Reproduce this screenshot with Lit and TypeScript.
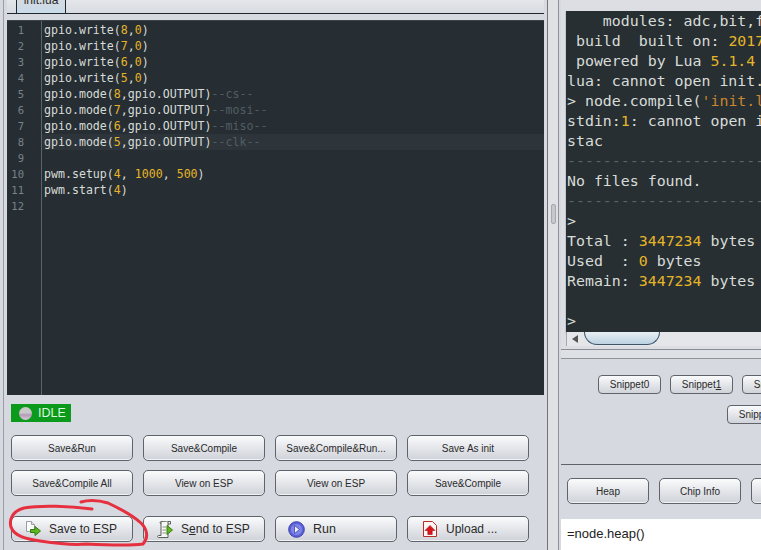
import { LitElement, html, css, svg } from "lit";
import { customElement } from "lit/decorators.js";

const num = (s: string) => html`<span class="y">${s}</span>`;

function codeLine(line: string) {
  const idx = line.indexOf("--");
  const body = idx >= 0 ? line.slice(0, idx) : line;
  const comment = idx >= 0 ? line.slice(idx) : "";
  const parts = body.split(/(\d+)/);
  return html`${parts.map((p, i) => (i % 2 ? num(p) : p))}${comment ? html`<span class="c">${comment}</span>` : ""}`;
}

const CODE = [
  "gpio.write(8,0)",
  "gpio.write(7,0)",
  "gpio.write(6,0)",
  "gpio.write(5,0)",
  "gpio.mode(8,gpio.OUTPUT)--cs--",
  "gpio.mode(7,gpio.OUTPUT)--mosi--",
  "gpio.mode(6,gpio.OUTPUT)--miso--",
  "gpio.mode(5,gpio.OUTPUT)--clk--",
  "",
  "pwm.setup(4, 1000, 500)",
  "pwm.start(4)",
  "",
];

const saveIcon = svg`<svg class="ic" width="16" height="16" viewBox="0 0 16 16">
  <path d="M1.500 .5h5l3 3v7h-8z" fill="#fbfbfb" stroke="#9a9da4"/>
  <path d="M6.500 .5v3h3" fill="#e3e5ea" stroke="#9a9da4"/>
  <path d="M5.500 8.500h4.500v-3l5.500 4.500-5.500 4.500v-3H5.500z" fill="#5fb81f" stroke="#2f7a12"/>
</svg>`;
const sendIcon = svg`<svg class="ic" width="16" height="17" viewBox="0 0 16 17">
  <path d="M4 .5h9.500v2.500H4c-1.200-.8-1.200-2 0-2.500z" fill="#f6f6f4" stroke="#5b5f58"/>
  <path d="M4 1v13.500H1.500c-1.200 0-1.200 2 0 2H11v-16" fill="#f6f6f4" stroke="#5b5f58"/>
  <path d="M5.500 6h3.500M5.500 9h3.500M5.500 12h3.500" stroke="#8a8e86"/>
  <path d="M10 4.500l5.500 4.500-5.500 4.500z" fill="#63b81e" stroke="#357f14"/>
</svg>`;
const runIcon = svg`<svg class="ic" width="17" height="17" viewBox="0 0 17 17">
  <circle cx="8.500" cy="8.500" r="7.800" fill="#5b62d8" stroke="#3a3fa8"/>
  <circle cx="8.500" cy="8.500" r="5.500" fill="#7f86ea"/>
  <path d="M6.500 4.500l5 4-5 4z" fill="#eef0ff" stroke="#2f3596" stroke-width=".7"/>
</svg>`;
const uploadIcon = svg`<svg class="ic" width="16" height="18" viewBox="0 0 16 18">
  <path d="M1.500 1.500h9l4 4v11h-13z" fill="#fdf4f4" stroke="#b92a2a"/>
  <path d="M8 5.500l5 5h-2.800v4H5.800v-4H3z" fill="#d9141c" stroke="#9c0f13" stroke-width=".6"/>
</svg>`;

@customElement("app-root")
export class AppRoot extends LitElement {
  static styles = css`
    :host {
      display: block;
      position: relative;
      width: 761px;
      height: 550px;
      overflow: hidden;
      background: #d6d9df;
      font-family: "Liberation Sans", Arial, sans-serif;
      color: #222;
    }
    .root { display: flex; height: 550px; }
    .left {
      box-sizing: border-box;
      width: 548px;
      flex: none;
      height: 550px;
      padding-left: 3px;
      border-right: 1px solid #6f7379;
      display: flex;
      flex-direction: column;
    }
    .left-in {
      flex: 1;
      border-left: 1px solid #9a9da3;
      padding-left: 3px;
      display: flex;
      flex-direction: column;
      min-height: 0;
    }
    .tabs {
      height: 14px;
      flex: none;
      box-sizing: border-box;
      border-bottom: 1px solid #20262b;
      padding-left: 9px;
      margin-right: 3px;
      background: linear-gradient(#e4e6ea, #d8dbe1);
    }
    .tab {
      box-sizing: border-box;
      width: 50px;
      height: 14px;
      border: 1px solid #20262b;
      border-top: none;
      background: linear-gradient(#d5dae2, #c8dbea);
      text-align: center;
      font-size: 12px;
      line-height: 12px;
      overflow: hidden;
      color: #2a2a2a;
    }
    .tab span { display: block; margin-top: -6px; }
    .editor {
      height: 375px;
      flex: none;
      margin-top: 6px;
      margin-right: 3px;
      background: #262e33;
      display: flex;
      font-family: "DejaVu Sans Mono", monospace;
      font-size: 11.6px;
      line-height: 16px;
      color: #d8dcd8;
      overflow: hidden;
      border-top: 1px solid #3a4247;
      box-sizing: border-box;
    }
    .gutter {
      width: 35px;
      flex: none;
      box-sizing: border-box;
      padding: 1px 17px 0 0;
      border-right: 1px solid #5b6368;
      text-align: right;
      color: #78838a;
      font-size: 10.500px;
    }
    .code { flex: 1; padding-top: 1px; min-width: 0; }
    .cl { height: 16px; padding-left: 2px; white-space: pre; }
    .cl.active { background: #2d353a; }
    .y { color: #e6b527; }
    .c { color: #515d64; }
    .status {
      margin: 9px 0 0 4px;
      width: 60px;
      height: 18px;
      background: #0b9a1c;
      color: #dff5df;
      font-size: 12.500px;
      display: flex;
      align-items: center;
      gap: 6px;
      padding-left: 8px;
      box-sizing: border-box;
      flex: none;
    }
    .lamp {
      width: 13px;
      height: 13px;
      border-radius: 50%;
      background: linear-gradient(#c9c9cc 45%, #b59ab8 60%, #d6cbd6);
    }
    .grid {
      display: grid;
      grid-template-columns: repeat(4, 122px);
      column-gap: 10px;
      margin: 13px 0 0 4px;
      flex: none;
    }
    .btn {
      box-sizing: border-box;
      height: 26px;
      border: 1px solid #5f646b;
      border-radius: 5px;
      background: linear-gradient(#fafbfc, #e6e8ec 45%, #cfd2d8);
      box-shadow: inset 0 -1px 0 #f2f3f5;
      font-size: 10px;
      display: flex;
      align-items: center;
      justify-content: center;
      white-space: nowrap;
      color: #2a2a2a;
    }
    .row2 { margin-top: 9px; }
    .row3 { margin-top: 20px; }
    .big { font-size: 12px; justify-content: flex-start; gap: 8px; }
    .big.p1 { padding-left: 13px; }
    .big.p3 { padding-left: 12px; font-size: 12.500px; }
    .big.p4 { padding-left: 14px; }
    .ic { flex: none; }
    .split {
      width: 10px;
      flex: none;
      border-right: 1px solid #8f9298;
      display: flex;
      align-items: center;
      justify-content: center;
      background: #dfe1e5;
    }
    .grip {
      width: 3px;
      height: 18px;
      border: 1px solid #a5a8ae;
      border-radius: 2px;
      background: #c6c8cd;
      margin-top: -122px;
    }
    .right {
      flex: 1;
      min-width: 0;
      display: flex;
      flex-direction: column;
      height: 550px;
      overflow: hidden;
      padding-left: 2px;
    }
    .topbox {
      height: 350px;
      flex: none;
      box-sizing: border-box;
      border-bottom: 1px solid #8a8d93;
      padding: 11px 0 0 5px;
      background: #dcdee3;
    }
    .out {
      height: 321px;
      background: #272f33;
      box-sizing: border-box;
      padding-left: 1px;
      font-family: "DejaVu Sans Mono", monospace;
      font-size: 14.900px;
      line-height: 20px;
      color: #d8dcd8;
      white-space: pre;
      overflow: hidden;
      box-shadow: 0 1px 1px #555;
    }
    .dash { color: #59646a; }
    .str { color: #c9862b; }
    .scroll {
      height: 14px;
      display: flex;
      align-items: flex-start;
      background: #e4e6ea;
      border-left: 1px solid #a5a8ae;
    }
    .arrow {
      width: 0;
      height: 0;
      margin: 3px 0 0 5px;
      border: 4px solid transparent;
      border-left: none;
      border-right: 6px solid #555;
    }
    .thumb {
      margin-left: 6px;
      width: 76px;
      height: 13px;
      box-sizing: border-box;
      border: 1px solid #3e5566;
      border-top: none;
      border-radius: 0 0 14px 14px;
      background: linear-gradient(#e8eef2, #bcd3e2);
    }
    .gap1 { height: 8px; flex: none; background: #dde0e4; border-bottom: 1px solid #8f9298; }
    .snips {
      height: 106px;
      flex: none;
      box-sizing: border-box;
      border-bottom: 1px solid #60646a;
      padding-top: 16px;
      overflow: hidden;
    }
    .srow { display: flex; gap: 9px; width: 400px; }
    .srow.a { padding-left: 37px; }
    .srow.b { padding-left: 166px; margin-top: 11px; }
    .sb {
      box-sizing: border-box;
      width: 63px;
      height: 19px;
      flex: none;
      border: 1px solid #5f646b;
      border-radius: 4px;
      background: linear-gradient(#fafbfc, #e4e6ea 50%, #d0d3d9);
      font-size: 10px;
      display: flex;
      align-items: center;
      justify-content: center;
      white-space: nowrap;
      overflow: hidden;
      color: #2a2a2a;
    }
    .cmds { display: flex; gap: 10px; padding: 13px 0 0 6px; width: 400px; flex: none; }
    .cmds .btn { width: 82px; flex: none; }
    .input {
      margin-top: 15px;
      flex: 1;
      background: #fff;
      padding-left: 6px;
      font-size: 13px;
      line-height: 29px;
      color: #222;
      white-space: pre;
    }
    .scribble { position: absolute; left: 0; top: 0; pointer-events: none; }
  `;

  render() {
    return html`
      <div class="root">
        <div class="left">
          <div class="left-in">
            <div class="tabs"><div class="tab"><span>init.lua</span></div></div>
            <div class="editor">
              <div class="gutter">${CODE.map((_, i) => html`<div>${i + 1}</div>`)}</div>
              <div class="code">
                ${CODE.map(
                  (l, i) => html`<div class="cl ${i === 7 ? "active" : ""}">${codeLine(l)}</div>`
                )}
              </div>
            </div>
            <div class="status"><span class="lamp"></span>IDLE</div>
            <div class="grid">
              <div class="btn">Save&amp;Run</div>
              <div class="btn">Save&amp;Compile</div>
              <div class="btn">Save&amp;Compile&amp;Run...</div>
              <div class="btn">Save As init</div>
              <div class="btn row2">Save&amp;Compile All</div>
              <div class="btn row2">View on ESP</div>
              <div class="btn row2">View on ESP</div>
              <div class="btn row2">Save&amp;Compile</div>
              <div class="btn big p1 row3">${saveIcon}<span>Save to ESP</span></div>
              <div class="btn big p1 row3">${sendIcon}<span>S<u>e</u>nd to ESP</span></div>
              <div class="btn big p3 row3">${runIcon}<span>Run</span></div>
              <div class="btn big p4 row3">${uploadIcon}<span>Upload ...</span></div>
            </div>
          </div>
        </div>
        <div class="split"><div class="grip"></div></div>
        <div class="right">
          <div class="topbox">
            <div class="out">${html`    modules: adc,bit,file,gpio
 build  built on: ${num("2017")}-${num("01")}
 powered by Lua ${num("5.1.4")} on SDK
lua: cannot open init.lua
&gt; node.compile(<span class="str">'init.lua'</span>)
stdin:${num("1")}: cannot open init.lua
stac
<span class="dash">--------------------------------</span>
No files found.
<span class="dash">--------------------------------</span>
&gt;
Total : ${num("3447234")} bytes
Used  : ${num("0")} bytes
Remain: ${num("3447234")} bytes

&gt;`}</div>
            <div class="scroll"><div class="arrow"></div><div class="thumb"></div></div>
          </div>
          <div class="gap1"></div>
          <div class="snips">
            <div class="srow a">
              <div class="sb">Snippet0</div>
              <div class="sb"><span>Snippet<u>1</u></span></div>
              <div class="sb">Snippet2</div>
            </div>
            <div class="srow b"><div class="sb">Snippet5</div></div>
          </div>
          <div class="cmds">
            <div class="btn">Heap</div>
            <div class="btn">Chip Info</div>
            <div class="btn">Chip ID</div>
          </div>
          <div class="input">=node.heap()</div>
        </div>
      </div>
      <svg class="scribble" width="761" height="550" viewBox="0 0 761 550" fill="none">
        <path
          d="M92 509C70 506 40 505 24 508C12 511 9 520 11 527C14 536 26 539 40 541C60 544 78 545 86 544C105 545 130 546 143 544C149 537 147 529 141 523C130 513 118 508 108 503C98 500 88 500 81 502"
          stroke="#e7303f"
          stroke-width="3"
          stroke-linecap="round"
        />
      </svg>
    `;
  }
}
